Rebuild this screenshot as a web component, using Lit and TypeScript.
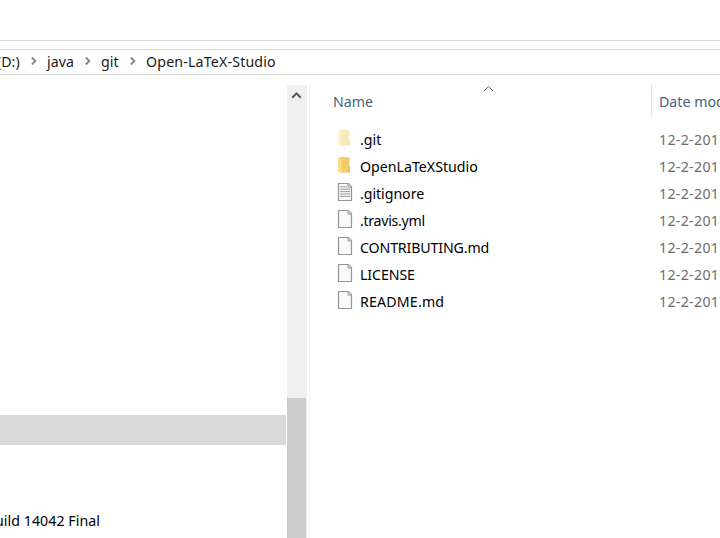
import { LitElement, html, svg, css } from "lit";
import { customElement } from "lit/decorators.js";

type Kind = "hidden-folder" | "folder" | "text" | "file";

interface Entry {
  name: string;
  kind: Kind;
  spacing: number;
}

const entries: Entry[] = [
  { name: ".git", kind: "hidden-folder", spacing: 0 },
  { name: "OpenLaTeXStudio", kind: "folder", spacing: 0 },
  { name: ".gitignore", kind: "text", spacing: -0.05 },
  { name: ".travis.yml", kind: "file", spacing: -0.3 },
  { name: "CONTRIBUTING.md", kind: "file", spacing: -0.14 },
  { name: "LICENSE", kind: "file", spacing: -0.1 },
  { name: "README.md", kind: "file", spacing: 0.17 },
];

const folderIcon = (pale: boolean) => html`<svg width="16" height="20" viewBox="0 0 16 20">
  <path d="M3 2H12.5V12L13 12.5V17.5H3Z" fill=${pale ? "#f9e9b8" : "#f0cc66"} />
  <path d="M11.5 12H13V17.5H11.5Z" fill=${pale ? "#f7e2a5" : "#e8bd4c"} />
  <path d="M1 2L4.5 4V19L1 16.5Z" fill=${pale ? "#fdf2cd" : "#fbdf8b"} />
</svg>`;

const pageIcon = (lined: boolean) => html`<svg width="16" height="20" viewBox="0 0 16 20">
  <path d="M1.5 1.5H11.5L14.5 4.5V18.5H1.5Z" fill="#f8f9fa" stroke="#969696" stroke-width="1.2" />
  <path d="M11 1.5V5H14.5" fill="#e2e2e2" stroke="#969696" />
  ${lined
    ? svg`<path d="M3 4.8H10M3 7.2H13.2M3 9.6H13.2M3 12H13.2M3 14.4H13.2" stroke="#999" fill="none" />`
    : ""}
</svg>`;

const iconFor = (kind: Kind) =>
  kind === "hidden-folder" || kind === "folder"
    ? folderIcon(kind === "hidden-folder")
    : pageIcon(kind === "text");

const crumbArrow = html`<svg class="arrow" width="8" height="10" viewBox="0 0 8 10">
  <path d="M1.8 1.5L5.3 5L1.8 8.5" fill="none" stroke="#858585" stroke-width="1.8" />
</svg>`;

@customElement("app-root")
export class AppRoot extends LitElement {
  static styles = css`
    :host {
      display: flex;
      flex-direction: column;
      width: 720px;
      height: 538px;
      overflow: hidden;
      background: #fff;
      color: #000;
      font: 14.2px/27px "Noto Sans", "Open Sans", sans-serif;
      white-space: nowrap;
    }
    svg {
      display: block;
      flex: none;
    }
    .ribbon {
      height: 40px;
      flex: none;
      border-bottom: 1px solid #d9d9d9;
    }
    .address {
      display: flex;
      height: 24px;
      flex: none;
      margin-top: 8px;
      border: solid #d9d9d9;
      border-width: 1px 0;
      line-height: 24px;
      color: #1a1a1a;
    }
    .crumb {
      flex: none;
      box-sizing: border-box;
    }
    .drive {
      width: 33px;
      margin-left: -3px;
    }
    .java {
      width: 37px;
      letter-spacing: 0.05px;
    }
    .git {
      width: 28px;
    }
    .open {
      letter-spacing: 0.17px;
    }
    .arrow {
      margin-top: 6px;
    }
    .after {
      width: 9px;
      flex: none;
    }
    .body {
      display: flex;
      flex: 1;
      margin-top: 10px;
      min-height: 0;
    }
    .nav {
      width: 287px;
      flex: none;
      display: flex;
      flex-direction: column;
    }
    .selected {
      width: 286px;
      height: 30px;
      margin-top: 330px;
      background: #d9d9d9;
    }
    .drive-item {
      margin: 62px 0 0 -5px;
      letter-spacing: 0.05px;
    }
    .scroll {
      width: 20px;
      flex: none;
      background: #f0f0f0;
    }
    .scroll svg {
      margin: 5px 0 0 4px;
    }
    .thumb {
      width: 19px;
      height: 140px;
      margin-top: 296px;
      background: #cdcdcd;
    }
    .files {
      flex: 1;
      min-width: 0;
      margin-left: 2px;
      border-left: 1px solid #f3f3f3;
    }
    .head {
      display: flex;
      height: 32px;
      line-height: 33px;
      color: #4c607a;
    }
    .col-name {
      display: flex;
      width: 318px;
      flex: none;
      padding-left: 23px;
      box-sizing: content-box;
      border-right: 1px solid #e2e2e2;
    }
    .col-name span {
      width: 150px;
    }
    .col-date {
      padding-left: 7px;
    }
    .list {
      padding: 9px 0 0 27px;
    }
    .row {
      display: flex;
      height: 27px;
    }
    .row svg {
      margin-top: 2px;
    }
    .name {
      width: 299px;
      margin-left: 7px;
      flex: none;
    }
    .date {
      color: #6d6d6d;
      letter-spacing: 0.3px;
    }
  `;

  render() {
    return html`
      <div class="ribbon"></div>
      <div class="address">
        <span class="crumb drive">(D:)</span>${crumbArrow}<span class="after"></span>
        <span class="crumb java">java</span>${crumbArrow}<span class="after"></span>
        <span class="crumb git">git</span>${crumbArrow}<span class="after"></span>
        <span class="crumb open">Open-LaTeX-Studio</span>
      </div>
      <div class="body">
        <div class="nav">
          <div class="selected"></div>
          <div class="drive-item">uild 14042 Final</div>
        </div>
        <div class="scroll">
          <svg width="12" height="12" viewBox="0 0 12 12">
            <path d="M1.2 7.7L5.5 3.4L9.8 7.7" fill="none" stroke="#555" stroke-width="2" />
          </svg>
          <div class="thumb"></div>
        </div>
        <div class="files">
          <div class="head">
            <div class="col-name">
              <span>Name</span>
              <svg width="11" height="8" viewBox="0 0 11 8">
                <path d="M1 6L5.5 1.5L10 6" fill="none" stroke="#666" />
              </svg>
            </div>
            <div class="col-date">Date modified</div>
          </div>
          <div class="list">
            ${entries.map(
              (e) => html`<div class="row">
                ${iconFor(e.kind)}
                <span class="name" style="letter-spacing:${e.spacing}px">${e.name}</span>
                <span class="date">12-2-2017</span>
              </div>`,
            )}
          </div>
        </div>
      </div>
    `;
  }
}
